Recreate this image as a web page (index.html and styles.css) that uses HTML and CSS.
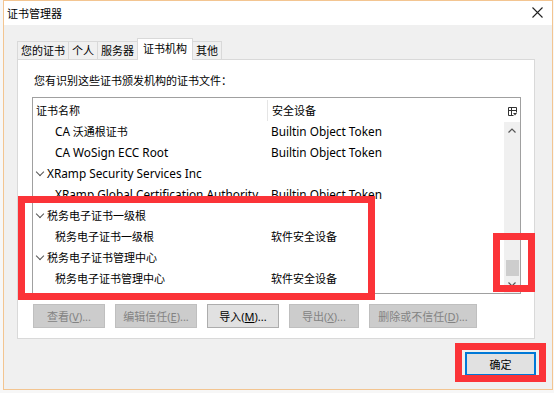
FILE: index.html
```html
<!DOCTYPE html>
<html lang="zh-CN">
<head>
    <meta charset="UTF-8">
    <title>证书管理器</title>
    <link rel="stylesheet" href="styles.css">
</head>
<body>
    <div class="window">
        <div class="titlebar">
            <span>证书管理器</span>
            <svg class="close" width="11" height="11" viewBox="0 0 11 11"><path d="M0.5 0.5L10.5 10.5M10.5 0.5L0.5 10.5" stroke="#222" stroke-width="1.1"/></svg>
        </div>
        <div class="content">
            <div class="tabs">
                <div class="tab">您的证书</div>
                <div class="tab">个人</div>
                <div class="tab">服务器</div>
                <div class="tab active">证书机构</div>
                <div class="tab">其他</div>
            </div>
            <div class="panel">
                <p class="label">您有识别这些证书颁发机构的证书文件：</p>
                <div class="listbox">
                    <div class="tree">
                        <div class="row head">
                            <div class="c1">证书名称</div>
                            <div class="c2">安全设备</div>
                        </div>
                        <div class="row child">
                            <div class="c1"><span class="en">CA</span>&nbsp;沃通根证书</div>
                            <div class="c2 en">Builtin Object Token</div>
                        </div>
                        <div class="row child">
                            <div class="c1 en">CA WoSign ECC Root</div>
                            <div class="c2 en">Builtin Object Token</div>
                        </div>
                        <div class="row parent">
                            <div class="c1 en"><span class="chev"></span>XRamp Security Services Inc</div>
                            <div class="c2"></div>
                        </div>
                        <div class="row child">
                            <div class="c1 en">XRamp Global Certification Authority</div>
                            <div class="c2 en">Builtin Object Token</div>
                        </div>
                        <div class="row parent">
                            <div class="c1"><span class="chev"></span>税务电子证书一级根</div>
                            <div class="c2"></div>
                        </div>
                        <div class="row child">
                            <div class="c1">税务电子证书一级根</div>
                            <div class="c2">软件安全设备</div>
                        </div>
                        <div class="row parent">
                            <div class="c1"><span class="chev"></span>税务电子证书管理中心</div>
                            <div class="c2"></div>
                        </div>
                        <div class="row child">
                            <div class="c1">税务电子证书管理中心</div>
                            <div class="c2">软件安全设备</div>
                        </div>
                    </div>
                    <div class="vscroll">
                        <div class="colpick">
                            <svg width="9" height="9" viewBox="0 0 9 9"><path d="M0.5 0.5H8.5V5.5M0.5 0.5V8.5H5.5M0.5 3.5H8.5M3.5 0.5V8.5" stroke="#333" fill="none"/><path d="M5 6H9L7 8.5Z" fill="#333"/></svg>
                        </div>
                        <div class="arrow up"><svg width="8" height="5" viewBox="0 0 8 5"><path d="M0.5 4.5L4 1L7.5 4.5" stroke="#555" stroke-width="1.2" fill="none"/></svg></div>
                        <div class="track"><div class="thumb"></div></div>
                        <div class="arrow down"><svg width="8" height="5" viewBox="0 0 8 5"><path d="M0.5 0.5L4 4L7.5 0.5" stroke="#555" stroke-width="1.2" fill="none"/></svg></div>
                    </div>
                </div>
                <div class="buttons">
                    <button class="btn off w72">查看(<u>V</u>)...</button>
                    <button class="btn off w82">编辑信任(<u>E</u>)...</button>
                    <button class="btn w72">导入(<u>M</u>)...</button>
                    <button class="btn off w70">导出(<u>X</u>)...</button>
                    <button class="btn off w108">删除或不信任(<u>D</u>)...</button>
                </div>
            </div>
            <div class="footer">
                <button class="btn ok">确定</button>
            </div>
        </div>
    </div>

    <div class="mark m1"></div>
    <div class="mark m2"></div>
    <div class="mark m3"></div>
</body>
</html>
```

FILE: styles.css
```css
body {
    margin: 0;
    position: relative;
    width: 554px;
    height: 393px;
    background: #f7f7f7;
    font-family: "Noto Sans", "Noto Sans CJK SC", sans-serif;
    font-size: 11px;
    color: #000;
    overflow: hidden;
}
.window {
    width: 550px;
    height: 390px;
    margin-left: 3px;
    box-sizing: border-box;
    border: 1px solid #f3c591;
    background: #f0f0f0;
}
.titlebar {
    height: 24px;
    background: #fff;
    display: flex;
    align-items: center;
    justify-content: space-between;
    padding: 0 9px 0 3px;
    font-size: 11px;
}
.close {
    margin-top: -2px;
}
.content {
    padding: 13px 17px 0 13px;
}
.tabs {
    display: flex;
    align-items: flex-end;
    height: 21px;
}
.tab {
    height: 17px;
    line-height: 17px;
    padding: 0 3px;
    margin-right: -1px;
    border: 1px solid #d9d9d9;
    border-bottom: none;
    background: #f0f0f0;
    white-space: nowrap;
}
.tab.active {
    height: 21px;
    line-height: 19px;
    padding: 0 5px;
    background: #fff;
    position: relative;
    z-index: 1;
    margin-bottom: -1px;
}
.panel {
    height: 280px;
    box-sizing: border-box;
    border: 1px solid #d9d9d9;
    background: #fff;
    padding: 14px 0 0 14px;
}
.label {
    margin: 0 0 9px 2px;
    line-height: 14px;
}
.listbox {
    width: 489px;
    height: 197px;
    box-sizing: border-box;
    border: 1px solid #a0a0a0;
    display: flex;
}
.tree {
    flex: 1;
    padding-top: 2px;
    overflow: hidden;
}
.row {
    display: flex;
    height: 21px;
    line-height: 21px;
    white-space: nowrap;
}
.en {
    font-size: 11.8px;
}
.c1 {
    width: 234px;
    flex: none;
    overflow: hidden;
    display: flex;
    align-items: center;
}
.c2 {
    padding-left: 4px;
}
.head .c1 {
    padding-left: 3px;
    width: 231px;
    border-right: 1px solid #e5e5e5;
}
.child .c1 {
    padding-left: 22px;
    width: 212px;
}
.parent .c1 {
    padding-left: 2px;
    width: 232px;
}
.chev {
    width: 5px;
    height: 5px;
    border-right: 1px solid #555;
    border-bottom: 1px solid #555;
    transform: rotate(45deg);
    margin: -4px 4px 0 2px;
}
.vscroll {
    width: 16px;
    display: flex;
    flex-direction: column;
    background: #f0f0f0;
}
.colpick {
    height: 22px;
    background: #fff;
    display: flex;
    align-items: center;
    justify-content: center;
    padding-top: 2px;
}
.arrow {
    height: 17px;
    display: flex;
    align-items: center;
    justify-content: center;
}
.track {
    flex: 1;
    position: relative;
}
.thumb {
    position: absolute;
    left: 2px;
    right: 1px;
    bottom: 0;
    height: 16px;
    background: #cdcdcd;
}
.buttons {
    display: flex;
    gap: 10px;
    margin: 10px 0 0 1px;
}
.btn {
    height: 24px;
    box-sizing: border-box;
    border: 1px solid #adadad;
    background: #e1e1e1;
    font: inherit;
    color: #000;
    padding: 0;
    white-space: nowrap;
}
.btn u {
    text-underline-offset: 1px;
}
.btn.off {
    background: #cccccc;
    border-color: #bfbfbf;
    color: #838383;
}
.w72 { width: 72px; }
.w82 { width: 82px; }
.w70 { width: 70px; }
.w108 { width: 108px; }
.footer {
    display: flex;
    justify-content: flex-end;
    margin-top: 13px;
}
.btn.ok {
    width: 71px;
    border: 2px solid #0078d7;
    margin-right: -1px;
}
.mark {
    position: absolute;
    box-sizing: border-box;
    border: 7px solid #fb3338;
}
.m1 {
    left: 18px;
    top: 196px;
    width: 357px;
    height: 104px;
}
.m2 {
    left: 493px;
    top: 233px;
    width: 42px;
    height: 59px;
}
.m3 {
    left: 455px;
    top: 343px;
    width: 91px;
    height: 39px;
}
```
